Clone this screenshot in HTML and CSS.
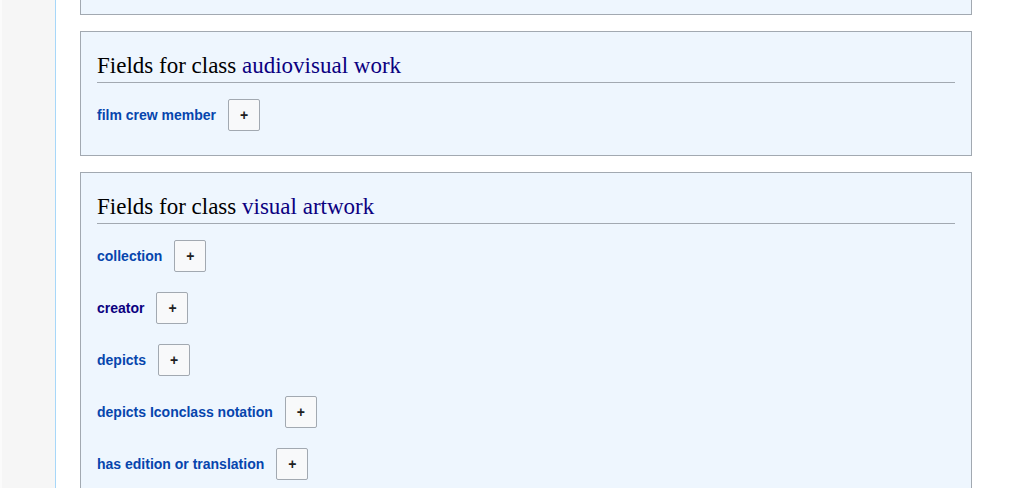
FILE: index.html
```html
<!DOCTYPE html>
<html lang="en">
<head>
<meta charset="utf-8">
<title>Fields for class</title>
<link rel="stylesheet" href="styles.css">
</head>
<body>
<div class="layout">
  <aside class="sidebar"></aside>
  <main class="content">
    <section class="card card--cut"></section>
    <section class="card">
      <h2 class="card-title">Fields for class <a class="visited" href="#">audiovisual work</a></h2>
      <div class="fields">
        <div class="field"><a class="field-label" href="#">film crew member</a><button class="add-btn" type="button">+</button></div>
      </div>
    </section>
    <section class="card">
      <h2 class="card-title">Fields for class <a class="visited" href="#">visual artwork</a></h2>
      <div class="fields">
        <div class="field"><a class="field-label" href="#">collection</a><button class="add-btn" type="button">+</button></div>
        <div class="field"><a class="field-label visited" href="#">creator</a><button class="add-btn" type="button">+</button></div>
        <div class="field"><a class="field-label" href="#">depicts</a><button class="add-btn" type="button">+</button></div>
        <div class="field"><a class="field-label" href="#">depicts Iconclass notation</a><button class="add-btn" type="button">+</button></div>
        <div class="field"><a class="field-label" href="#">has edition or translation</a><button class="add-btn" type="button">+</button></div>
      </div>
    </section>
  </main>
</div>
</body>
</html>
```

FILE: styles.css
```css
html, body {
  margin: 0;
  padding: 0;
  background: #ffffff;
  height: 100%;
  overflow: hidden;
}

.layout {
  display: flex;
  min-height: 100%;
}

.sidebar {
  flex: 0 0 53px;
  background: #f6f6f6;
  border-left: 2px solid #fbfbfb;
  border-right: 1px solid #a7d7f9;
}

.content {
  flex: 1;
  padding: 0 51px 0 24px;
  display: flex;
  flex-direction: column;
  gap: 16px;
}

.card {
  background: #eef6fe;
  border: 1px solid #a2a9b1;
  padding: 16px 16px 24px;
}

.card--cut {
  margin-top: -60px;
  height: 33px;
}

.card-title {
  margin: 4px 0 0;
  padding-bottom: 2px;
  font-family: "Liberation Serif", Georgia, serif;
  font-weight: normal;
  font-size: 23px;
  line-height: 28px;
  color: #000000;
  border-bottom: 1px solid #a2a9b1;
}

.card-title a {
  text-decoration: none;
}

a {
  color: #0645ad;
  text-decoration: none;
}

a.visited {
  color: #0b0080;
}

.fields {
  margin-top: 16px;
  display: flex;
  flex-direction: column;
  gap: 20px;
}

.field {
  display: flex;
  align-items: center;
  gap: 12px;
}

.field-label {
  font-family: "Liberation Sans", Arial, sans-serif;
  font-weight: bold;
  font-size: 14px;
}

.add-btn {
  width: 32px;
  height: 32px;
  padding: 0;
  background: #f8f9fa;
  border: 1px solid #a2a9b1;
  border-radius: 2px;
  font-family: "Liberation Sans", Arial, sans-serif;
  font-weight: bold;
  font-size: 14px;
  color: #202122;
  cursor: pointer;
}
```
